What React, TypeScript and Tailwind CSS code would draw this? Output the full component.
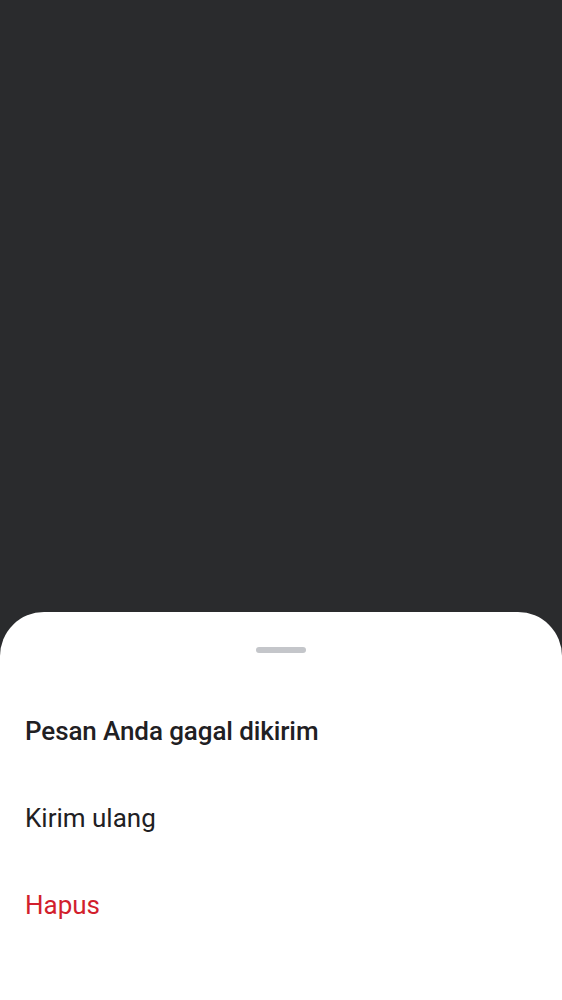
export default function App() {
  return (
    <div className="h-[1000px] w-full bg-[#2a2b2d] flex flex-col justify-end overflow-hidden" style={{ fontFamily: "Roboto, 'Noto Sans', sans-serif" }}>
      <div className="h-[388px] bg-white rounded-t-[44px] flex flex-col">
        <div className="pt-[35px] flex justify-center">
          <div className="w-[50px] h-[6px] rounded-full bg-[#c4c6ca]" />
        </div>
        <div className="pt-[61px] px-[25px] text-[26px] leading-[34px] font-medium text-[#1f2023] tracking-[-0.1px]">
          Pesan Anda gagal dikirim
        </div>
        <button className="mt-[53px] px-[25px] text-left text-[26px] leading-[34px] text-[#1f2023]">
          Kirim ulang
        </button>
        <button className="mt-[53px] px-[25px] text-left text-[26px] leading-[34px] text-[#d21f2d]">
          Hapus
        </button>
      </div>
    </div>
  );
}
